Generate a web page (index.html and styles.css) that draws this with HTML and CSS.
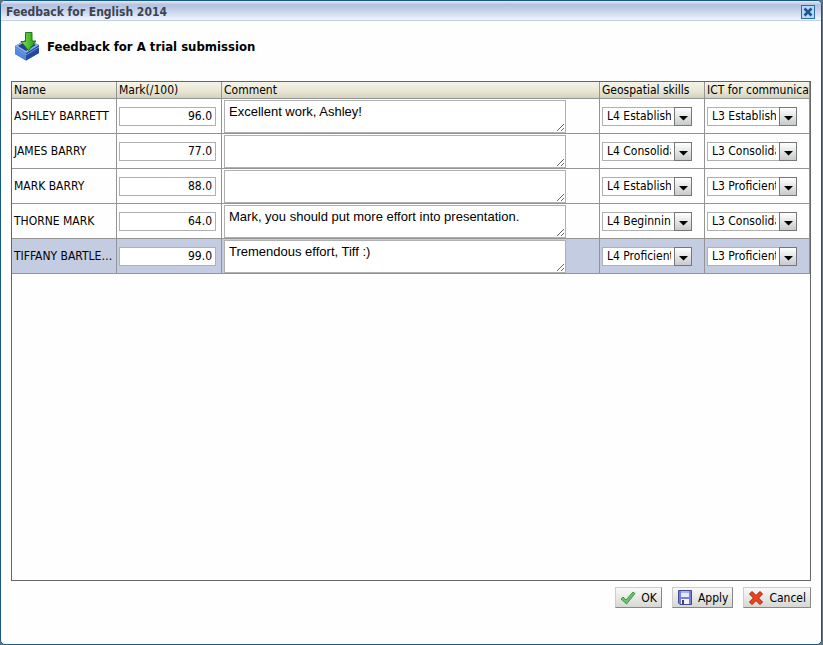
FILE: index.html
```
<!DOCTYPE html>
<html lang="en">
<head>
  <meta charset="UTF-8" />
  <title>Feedback for English 2014</title>
  <link rel="stylesheet" href="styles.css">
</head>
<body>

  <div class="window">
    <div class="titlebar">
      <span>Feedback for English 2014</span>
      <button class="close" aria-label="Close">
        <svg width="10" height="10" viewBox="0 0 10 10"><path d="M1.500 1.500l7 7M8.500 1.500l-7 7" stroke="#1d5590" stroke-width="2.6" /></svg>
      </button>
    </div>

    <div class="heading">
      <svg width="26" height="30" viewBox="0 0 26 30">
        <defs>
          <linearGradient id="arrow" x1="0" x2="1"><stop offset="0" stop-color="#8be05a" /><stop offset="1" stop-color="#1b9a12" /></linearGradient>
        </defs>
        <path d="M1 15L13 8l12 6v8L12 29.500 1 23z" fill="#2d5db8" />
        <path d="M1 15l11 7v7.500L1 23z" fill="#5488da" />
        <path d="M12 22l13-8v8l-13 7.500z" fill="#2748a0" />
        <path d="M1 15L13 8l12 6-13 8z" fill="#8fb2ec" />
        <path d="M4 15l9-5 9 4-10 6z" fill="#23418c" />
        <path d="M1 17l11 7 13-8" fill="none" stroke="#6f9be4" />
        <path d="M11.500 1.500h6.500V10h4L14.500 19.500 7 10.500h4.500z" fill="url(#arrow)" stroke="#197f12" stroke-linejoin="round" />
      </svg>
      <h1>Feedback for A trial submission</h1>
    </div>

    <div class="grid">
      <table>
        <colgroup>
          <col class="narrow"><col class="narrow"><col><col class="narrow"><col class="narrow">
        </colgroup>
        <thead>
          <tr><th>Name</th><th>Mark(/100)</th><th>Comment</th><th>Geospatial skills</th><th>ICT for communication</th></tr>
        </thead>
        <tbody>
          <tr>
            <td>ASHLEY BARRETT</td>
            <td><input class="mark" type="text" value="96.0" aria-label="Mark for Ashley Barrett"></td>
            <td><textarea aria-label="Comment for Ashley Barrett">Excellent work, Ashley!</textarea></td>
            <td><div class="combo"><select aria-label="Geospatial skills, Ashley Barrett"><option>L4 Establishing</option></select><svg class="arrow" viewBox="0 0 16 17"><path d="M4 8h9l-4.500 4.500z" /></svg></div></td>
            <td><div class="combo"><select aria-label="ICT, Ashley Barrett"><option>L3 Establishing</option></select><svg class="arrow" viewBox="0 0 16 17"><path d="M4 8h9l-4.500 4.500z" /></svg></div></td>
          </tr>
          <tr>
            <td>JAMES BARRY</td>
            <td><input class="mark" type="text" value="77.0" aria-label="Mark for James Barry"></td>
            <td><textarea aria-label="Comment for James Barry"></textarea></td>
            <td><div class="combo"><select aria-label="Geospatial skills, James Barry"><option>L4 Consolidating</option></select><svg class="arrow" viewBox="0 0 16 17"><path d="M4 8h9l-4.500 4.500z" /></svg></div></td>
            <td><div class="combo"><select aria-label="ICT, James Barry"><option>L3 Consolidating</option></select><svg class="arrow" viewBox="0 0 16 17"><path d="M4 8h9l-4.500 4.500z" /></svg></div></td>
          </tr>
          <tr>
            <td>MARK BARRY</td>
            <td><input class="mark" type="text" value="88.0" aria-label="Mark for Mark Barry"></td>
            <td><textarea aria-label="Comment for Mark Barry"></textarea></td>
            <td><div class="combo"><select aria-label="Geospatial skills, Mark Barry"><option>L4 Establishing</option></select><svg class="arrow" viewBox="0 0 16 17"><path d="M4 8h9l-4.500 4.500z" /></svg></div></td>
            <td><div class="combo"><select aria-label="ICT, Mark Barry"><option>L3 Proficient</option></select><svg class="arrow" viewBox="0 0 16 17"><path d="M4 8h9l-4.500 4.500z" /></svg></div></td>
          </tr>
          <tr>
            <td>THORNE MARK</td>
            <td><input class="mark" type="text" value="64.0" aria-label="Mark for Thorne Mark"></td>
            <td><textarea aria-label="Comment for Thorne Mark">Mark, you should put more effort into presentation.</textarea></td>
            <td><div class="combo"><select aria-label="Geospatial skills, Thorne Mark"><option>L4 Beginning</option></select><svg class="arrow" viewBox="0 0 16 17"><path d="M4 8h9l-4.500 4.500z" /></svg></div></td>
            <td><div class="combo"><select aria-label="ICT, Thorne Mark"><option>L3 Consolidating</option></select><svg class="arrow" viewBox="0 0 16 17"><path d="M4 8h9l-4.500 4.500z" /></svg></div></td>
          </tr>
          <tr class="selected">
            <td>TIFFANY BARTLETT</td>
            <td><input class="mark" type="text" value="99.0" aria-label="Mark for Tiffany Bartlett"></td>
            <td><textarea aria-label="Comment for Tiffany Bartlett">Tremendous effort, Tiff :)</textarea></td>
            <td><div class="combo"><select aria-label="Geospatial skills, Tiffany Bartlett"><option>L4 Proficient</option></select><svg class="arrow" viewBox="0 0 16 17"><path d="M4 8h9l-4.500 4.500z" /></svg></div></td>
            <td><div class="combo"><select aria-label="ICT, Tiffany Bartlett"><option>L3 Proficient</option></select><svg class="arrow" viewBox="0 0 16 17"><path d="M4 8h9l-4.500 4.500z" /></svg></div></td>
          </tr>
        </tbody>
      </table>
    </div>

    <div class="buttons">
      <button>
        <svg width="16" height="16" viewBox="0 0 16 16"><path d="M1 9l2-2 3 3 7-8 2 1.500L6.500 14z" fill="#6cc06a" stroke="#3c9a48" stroke-linejoin="round" /></svg>
        OK
      </button>
      <button>
        <svg width="16" height="16" viewBox="0 0 16 16">
          <path d="M1.500.5h13v14H3L1.500 13z" fill="#7780d4" stroke="#454a94" />
          <path d="M4 1h8v6H4z" fill="#e4e9fb" />
          <path d="M4 1h8v2H4z" fill="#a9b4e8" />
          <path d="M4 9h8v5H4z" fill="#f4f5fb" />
          <path d="M5 10h2v4H5z" fill="#3b3f80" />
        </svg>
        Apply
      </button>
      <button>
        <svg width="16" height="16" viewBox="0 0 16 16"><path d="M4 1.500l4 4 4-4 2.500 2.500-4 4 4 4L12 14.500l-4-4-4 4L1.500 12l4-4-4-4z" fill="#f0441c" stroke="#a81808" stroke-linejoin="round" /></svg>
        Cancel
      </button>
    </div>
  </div>

</body>
</html>
```
FILE: styles.css
```
* {
  box-sizing: border-box;
}
body {
  margin: 0;
  background: #5f7280;
  font-family: "DejaVu Sans Condensed", "DejaVu Sans", sans-serif;
  font-size: 12px;
  color: #000;
}
.window {
  display: flex;
  flex-direction: column;
  min-height: 100vh;
  margin-right: 1px;
  background: #fefefe;
  border: 1px solid #165a84;
  border-radius: 5px;
  overflow: hidden;
}
.titlebar {
  display: flex;
  align-items: center;
  justify-content: space-between;
  height: 20px;
  padding: 2px 6px 0 5px;
  background: linear-gradient(#e4ebf8, #b4c0de 20%, #c6d2ea 50%, #f0f4fc);
  border-bottom: 1px solid #c2d2e6;
  color: #3c4450;
  font-weight: bold;
}
.close {
  display: flex;
  align-items: center;
  justify-content: center;
  width: 14px;
  height: 14px;
  padding: 0;
  background: #b8d8f4;
  border: 1px solid #2a6ca6;
}
.heading {
  display: flex;
  align-items: center;
  gap: 7px;
  padding: 10px 13px 20px;
}
h1 {
  margin: 0;
  font-size: 13px;
}
.grid {
  flex: 1;
  margin: 0 10px;
  border: 1px solid #666;
}
table {
  width: 100%;
  table-layout: fixed;
  border-collapse: separate;
  border-spacing: 0;
}
.narrow {
  width: 105px;
}
th,
td {
  padding: 0 2px;
  border-right: 1px solid #949494;
  border-bottom: 1px solid #949494;
  text-align: left;
  font-weight: normal;
  white-space: nowrap;
  overflow: hidden;
}
th {
  height: 17px;
  background: linear-gradient(#f4f3e9, #e8e6d2 60%, #d2d0c0);
}
td {
  height: 35px;
  text-overflow: ellipsis;
}
th:last-child {
  padding-right: 0;
}
.selected td {
  background: #c3cce0;
}
.mark {
  display: block;
  width: 97px;
  height: 19px;
  padding: 0 3px;
  border: 1px solid #b0b0b0;
  background: #fff;
  font: inherit;
  text-align: right;
}
textarea {
  display: block;
  width: 342px;
  height: 33px;
  padding: 3px 4px;
  border: 1px solid #b0b0b0;
  background: #fff;
  font: 13px/15px "Liberation Sans", Arial, sans-serif;
}
.combo {
  position: relative;
  width: 90px;
}
select {
  appearance: none;
  display: block;
  width: 100%;
  height: 19px;
  padding: 0 20px 0 4px;
  border: 1px solid #b0b0b0;
  border-radius: 0;
  background: #fff;
  color: #000;
  font: inherit;
}
/* drop-down button face, clicks go through to the select */
.arrow {
  position: absolute;
  top: 0;
  right: 0;
  width: 18px;
  height: 19px;
  border: 1px solid #777;
  background: linear-gradient(#fff, #c8cacc);
  pointer-events: none;
}
.buttons {
  display: flex;
  justify-content: flex-end;
  gap: 10px;
  padding: 6px 10px 36px;
}
.buttons button {
  display: flex;
  align-items: center;
  gap: 5px;
  height: 21px;
  padding: 0 4px;
  background: linear-gradient(#fafafa, #d6d6d2);
  border: 1px solid #ccc;
  border-right-color: #888;
  border-bottom-color: #888;
  font: inherit;
  color: #000;
}
```
